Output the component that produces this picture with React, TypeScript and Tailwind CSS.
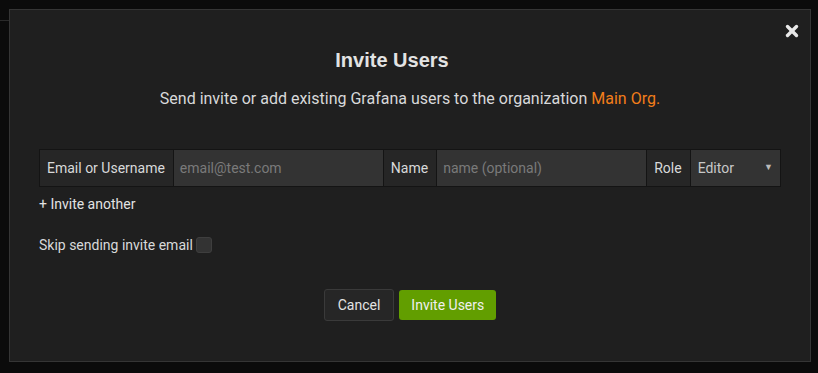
import { X } from "lucide-react"

export default function App() {
  return (
    <div
      className="relative w-[818px] h-[373px] bg-[#0b0b0b] pt-[9px] pl-[9px]"
      style={{ fontFamily: "Roboto, Helvetica, Arial, sans-serif" }}
    >
      <div className="absolute left-0 top-[20px] w-[9px] h-px bg-[#2a2a2a]" />

      <div className="relative w-[802px] h-[353px] bg-[#1f1f1f] border border-[#353535] flex flex-col items-center">
        <button className="absolute top-[12px] right-[9px] text-[#e8e8e8]">
          <X className="w-[18px] h-[18px]" strokeWidth={4.5} />
        </button>

        <h2
          className="mt-[37px] pr-[36px] text-[20px] leading-[26px] font-bold text-[#e3e3e3]"
          style={{ fontFamily: "'Liberation Sans', Arial, sans-serif" }}
        >
          Invite Users
        </h2>
        <p className="mt-[15px] text-[16px] leading-[22px] text-[#d8d9da]">
          Send invite or add existing Grafana users to the organization{" "}
          <span className="text-[#f27d1a]">Main Org.</span>
        </p>

        <div className="self-stretch px-[29px] mt-[39px]">
          <div className="flex h-[38px] border border-[#141414] text-[14px] bg-[#141414] gap-px">
            <div className="flex items-center pl-[7px] pr-[8px] bg-[#262626] text-[#d8d9da]">Email or Username</div>
            <div className="flex items-center w-[209px] px-[6px] bg-[#333333] text-[#7a7a7a]">email@test.com</div>
            <div className="flex items-center pl-[7px] pr-[8px] bg-[#262626] text-[#d8d9da]">Name</div>
            <div className="flex items-center w-[209px] px-[6px] bg-[#333333] text-[#7a7a7a]">name (optional)</div>
            <div className="flex items-center pl-[7px] pr-[8px] bg-[#262626] text-[#d8d9da]">Role</div>
            <div className="flex items-center justify-between flex-1 px-[7px] bg-[#333333] text-[#c8c8c8]">
              <span>Editor</span>
              <span className="text-[9px] text-[#bbbbbb]">▼</span>
            </div>
          </div>

          <div className="mt-[7px] text-[14px] leading-[20px] text-[#e3e3e3]">+ Invite another</div>

          <div className="mt-[21px] flex items-center text-[14px] leading-[20px] text-[#d8d9da]">
            <span>Skip sending invite email</span>
            <span className="ml-[3px] w-[16px] h-[16px] rounded-[3px] bg-[#333333] border border-[#3e3e3e]" />
          </div>
        </div>

        <div className="mt-[34px] flex gap-[5px] text-[14px]">
          <button className="h-[32px] px-[13px] rounded-[3px] bg-[#262626] border border-[#3a3a3a] text-[#e3e3e3]">
            Cancel
          </button>
          <button className="h-[30px] mt-px px-[12px] rounded-[3px] bg-[#629e00] text-[#f0f0f0]">
            Invite Users
          </button>
        </div>
      </div>
    </div>
  )
}
